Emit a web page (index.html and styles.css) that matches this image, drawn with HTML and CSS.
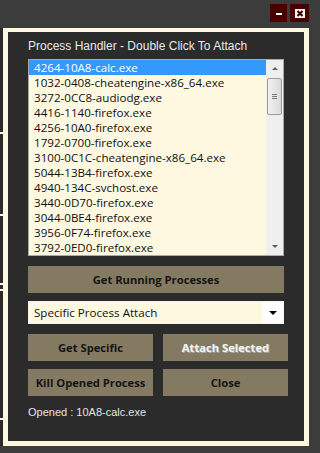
FILE: index.html
```html
<!DOCTYPE html>
<html lang="en">
<head>
  <meta charset="UTF-8" />
  <title>Process Handler</title>
  <link rel="stylesheet" href="styles.css">
</head>
<body>
  <div class="titlebar">
    <button class="win-btn"><span class="dash"></span></button>
    <button class="win-btn">
      <svg width="10" height="9" viewBox="0 0 10 9">
        <rect x="0" y="0" width="10" height="9" fill="#f4f4f4"/>
        <path d="M2.5 2 L7.5 7 M7.5 2 L2.5 7" stroke="#3a0000" stroke-width="2"/>
      </svg>
    </button>
  </div>

  <div class="desk">
    <div class="behind"></div>
    <div class="frame">
      <div class="panel">
        <div class="caption">Process Handler - Double Click To Attach</div>

        <div class="listbox">
          <ul class="items">
            <li class="selected">4264-10A8-calc.exe</li>
            <li>1032-0408-cheatengine-x86_64.exe</li>
            <li>3272-0CC8-audiodg.exe</li>
            <li>4416-1140-firefox.exe</li>
            <li>4256-10A0-firefox.exe</li>
            <li>1792-0700-firefox.exe</li>
            <li>3100-0C1C-cheatengine-x86_64.exe</li>
            <li>5044-13B4-firefox.exe</li>
            <li>4940-134C-svchost.exe</li>
            <li>3440-0D70-firefox.exe</li>
            <li>3044-0BE4-firefox.exe</li>
            <li>3956-0F74-firefox.exe</li>
            <li>3792-0ED0-firefox.exe</li>
          </ul>
          <div class="vscroll">
            <div class="arrow"><span class="tri-up"></span></div>
            <div class="track">
              <div class="thumb"><span class="grip"></span></div>
            </div>
            <div class="arrow"><span class="tri-down"></span></div>
          </div>
        </div>

        <button class="btn wide">Get Running Processes</button>

        <div class="combo">
          <span class="combo-text">Specific Process Attach</span>
          <span class="combo-arrow"><span class="tri-black"></span></span>
        </div>

        <div class="btn-grid">
          <button class="btn">Get Specific</button>
          <button class="btn disabled">Attach Selected</button>
          <button class="btn">Kill Opened Process</button>
          <button class="btn">Close</button>
        </div>

        <div class="status">Opened : 10A8-calc.exe</div>
      </div>
    </div>
  </div>
</body>
</html>
```

FILE: styles.css
```css
:root {
  --desk: #3c3c3c;
  --panel: #2b2b2b;
  --cream: #fff8e1;
  --taupe: #847a62;
  --maroon: #4b0000;
  --select: #3399ff;
}

body {
  margin: 0;
  background-color: var(--desk);
  font-family: "Liberation Sans", Arial, sans-serif;
  width: 320px;
  height: 453px;
  overflow: hidden;
}

.titlebar {
  height: 28px;
  display: flex;
  justify-content: flex-end;
  align-items: flex-start;
  gap: 3px;
  padding: 4px 11px 0 0;
  box-sizing: border-box;
}

.win-btn {
  width: 17px;
  height: 18px;
  background: var(--maroon);
  border: none;
  padding: 0;
  display: flex;
  align-items: center;
  justify-content: center;
}

.win-btn:last-child {
  width: 19px;
}

.dash {
  width: 6px;
  height: 2px;
  background: #fff;
  margin-top: 1px;
}

.desk {
  display: flex;
}

.behind {
  width: 3px;
  height: 418px;
  background:
    linear-gradient(to bottom,
      transparent 104px, var(--cream) 104px, var(--cream) 106px, transparent 106px,
      transparent 186px, var(--cream) 186px, var(--cream) 188px, transparent 188px,
      transparent 255px, var(--cream) 255px, var(--cream) 257px, transparent 257px,
      transparent 261px, var(--cream) 261px, var(--cream) 263px, transparent 263px,
      transparent 390px, var(--cream) 390px, var(--cream) 392px, transparent 392px),
    var(--panel);
}

.frame {
  width: 306px;
  border-style: solid;
  border-color: var(--cream);
  border-width: 4px 5px 5px 5px;
  box-sizing: border-box;
}

.panel {
  height: 409px;
  background: var(--panel);
  padding: 7px 12px 0 20px;
  box-sizing: border-box;
}

.caption {
  font-size: 12px;
  line-height: 14px;
  color: #e8e8e8;
}

.listbox {
  margin-top: 6px;
  width: 256px;
  height: 197px;
  border: 1px solid #a9a9a9;
  box-sizing: border-box;
  background: var(--cream);
  display: flex;
}

.items {
  list-style: none;
  margin: 0;
  padding: 0;
  flex: 1;
  font-family: "Open Sans", sans-serif;
  font-size: 11.6px;
  color: #111;
}

.items li {
  height: 15px;
  line-height: 15px;
  padding-left: 5px;
  white-space: nowrap;
}

.items li.selected {
  background: var(--select);
  color: #fff;
}

.vscroll {
  width: 17px;
  background: #efefef;
  display: flex;
  flex-direction: column;
}

.arrow {
  height: 17px;
  display: flex;
  align-items: center;
  justify-content: center;
}

.tri-up,
.tri-down {
  width: 0;
  height: 0;
  border-left: 3px solid transparent;
  border-right: 3px solid transparent;
}

.tri-up {
  border-bottom: 3px solid #606060;
}

.tri-down {
  border-top: 3px solid #606060;
}

.track {
  flex: 1;
  padding: 1px 1px 0 1px;
}

.thumb {
  height: 37px;
  border: 1px solid #9c9c9c;
  border-radius: 2px;
  background: linear-gradient(to right, #f2f2f2, #dadada);
  box-sizing: border-box;
  display: flex;
  align-items: center;
  justify-content: center;
}

.grip {
  width: 5px;
  height: 5px;
  background: repeating-linear-gradient(to bottom, #7a7a7a 0 1px, transparent 1px 2px);
}

.btn {
  background: var(--taupe);
  border: none;
  height: 27px;
  padding: 0;
  font-family: "Open Sans", sans-serif;
  font-weight: bold;
  font-size: 11.2px;
  color: #141414;
}

.btn.wide {
  display: block;
  width: 256px;
  margin-top: 10px;
}

.btn.disabled {
  color: #f4f4f4;
  text-shadow: 0 0 1px #9a9a9a, 1px 1px 0 #a8a8a8;
}

.combo {
  margin-top: 8px;
  width: 256px;
  height: 23px;
  border: 1px solid #f2f2f2;
  box-sizing: border-box;
  display: flex;
  background: var(--cream);
}

.combo-text {
  flex: 1;
  padding-left: 5px;
  font-family: "Open Sans", sans-serif;
  font-size: 11.6px;
  line-height: 21px;
  color: #111;
}

.combo-arrow {
  width: 21px;
  background: #fff;
  display: flex;
  align-items: center;
  justify-content: center;
}

.tri-black {
  width: 0;
  height: 0;
  border-left: 4px solid transparent;
  border-right: 4px solid transparent;
  border-top: 4px solid #000;
}

.btn-grid {
  margin-top: 10px;
  display: grid;
  grid-template-columns: 125px 125px;
  column-gap: 10px;
  row-gap: 8px;
}

.status {
  margin-top: 10px;
  font-size: 11px;
  line-height: 13px;
  color: #e4e4e4;
}
```
